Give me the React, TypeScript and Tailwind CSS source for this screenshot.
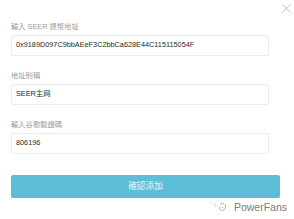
import React from 'react';

const font = { fontFamily: '"Liberation Sans", "Noto Sans CJK TC", "Noto Sans CJK SC", sans-serif' };

const fields = [
  { label: '輸入 SEER 提幣地址', value: '0x9189D097C9bbAEeF3C2bbCa628E44C115115054F' },
  { label: '地址别稱', value: 'SEER主网' },
  { label: '輸入谷歌驗證碼', value: '806196' },
];

function Field({ label, value }: { label: string; value: string }) {
  return (
    <div className="flex flex-col">
      <label className="h-[10px] text-[7.3px] leading-[10px] text-[#9a9a9a]">{label}</label>
      <div className="mt-[3px] flex h-[21px] items-center rounded-[2px] border border-[#ececec] bg-white px-[4px] text-[7.3px] text-[#2a2a2a]">
        {value}
      </div>
    </div>
  );
}

export default function App() {
  return (
    <div className="relative h-[219px] w-[294px] overflow-hidden bg-white" style={font}>
      {/* close button */}
      <button className="absolute right-[3px] top-[4px] flex h-[9px] w-[9px] items-center justify-center">
        <svg width="9" height="9" viewBox="0 0 9 9" fill="none" stroke="#b5b5b5" strokeWidth="0.8">
          <path d="M0.5 0.5 L8.5 8.5 M8.5 0.5 L0.5 8.5" />
        </svg>
      </button>

      <div className="flex flex-col gap-[15px] px-[11px] pt-[22px] w-[280px]">
        {fields.map((f) => (
          <Field key={f.label} label={f.label} value={f.value} />
        ))}
      </div>

      <div className="mx-[11px] mt-[21px] flex h-[23px] w-[269px] items-center justify-center rounded-[2px] bg-[#5ebed7] text-[8.7px] text-[#e8f6fa]">
        確認添加
      </div>

      {/* watermark */}
      <div className="mt-[3px] flex items-center justify-end gap-[7px] pr-[7px]">
        <svg width="14" height="10" viewBox="0 0 14 10" fill="none" stroke="#9a9a9a" strokeWidth="0.8">
          <path d="M1 3 L3 5 M2 1.5 L4 3.5" strokeDasharray="1 1" />
          <path d="M7 2 C9.5 1 12.5 2 12.5 5 C12.5 8 9 9 7.5 8 C6 7 6 5 7.5 4.5" />
          <circle cx="9.5" cy="5.5" r="0.6" fill="#9a9a9a" stroke="none" />
        </svg>
        <span className="text-[10.5px] leading-[12px] text-[#7a7a7a]">PowerFans</span>
      </div>
    </div>
  );
}
